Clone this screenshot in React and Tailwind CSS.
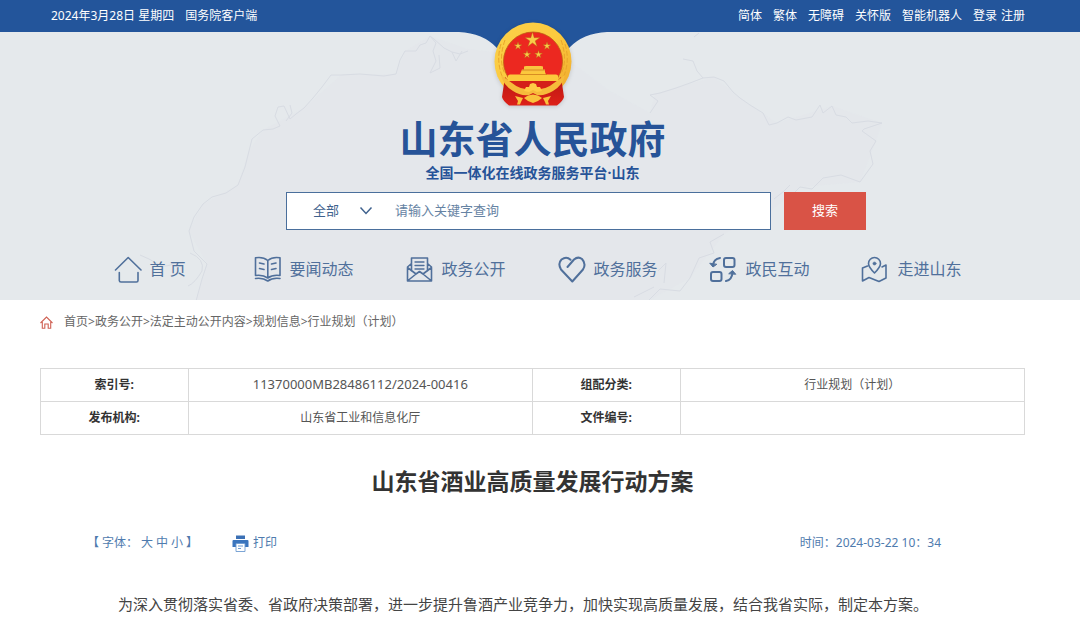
import React from "react";

const star = (cx, cy, r) => {
  const pts = [];
  for (let i = 0; i < 10; i++) {
    const a = (Math.PI / 5) * i - Math.PI / 2;
    const k = i % 2 ? r * 0.36 : r;
    pts.push(`${(cx + k * Math.cos(a)).toFixed(1)},${(cy + k * Math.sin(a)).toFixed(1)}`);
  }
  return pts.join(" ");
};

function Emblem() {
  return (
    <svg viewBox="0 0 80 86" className="h-[86px] w-20 drop-shadow-sm" role="img" aria-label="国徽">
      <defs>
        <linearGradient id="gold" x1="0" y1="0" x2="1" y2="1">
          <stop offset="0" stopColor="#fbd04a" />
          <stop offset="0.5" stopColor="#fcca3e" />
          <stop offset="1" stopColor="#eda52a" />
        </linearGradient>
        <linearGradient id="drape" x1="0" y1="0" x2="0" y2="1">
          <stop offset="0" stopColor="#b91712" />
          <stop offset="1" stopColor="#dd2018" />
        </linearGradient>
      </defs>
      <ellipse cx="40" cy="39.500" rx="38.500" ry="39" fill="url(#gold)" />
      <path
        d="M8 22 Q3 38 9 54 M12 18 Q5 38 12 52 M72 22 Q77 38 71 54 M68 18 Q75 38 68 52"
        fill="none"
        stroke="#e9a42a"
        strokeWidth="1"
        strokeDasharray="5 2"
      />
      <path d="M12 55 L9 75 Q10 79 16 83.500 H64 Q70 79 71 75 L68 55 L60 64 L40 70 L20 64 Z" fill="url(#drape)" />
      <ellipse cx="40" cy="39.500" rx="29.500" ry="29.500" fill="#ec2820" stroke="#bf5a13" strokeWidth="0.8" />
      <path d="M14 59 H66 L56 66 H24 Z" fill="#d42019" />
      <path d="M8 53 Q15 58 19 61 Q27 68 40 68 Q53 68 61 61 L72 53 Q70 63 60 69 Q52 74 44 73 L40 71 L36 73 Q27 74 20 69 Q10 63 8 53Z" fill="#f6bb3b" />
      <path d="M15 59 V54 Q15 52.500 17 52.500 H27 L28 50 H52 L53 52.500 H63 Q65 52.500 65 54 V59 Z" fill="#fcc83c" />
      <path d="M28 50 L29 47.500 H31 V44.500 L33 44 H48 L50 44.500 V47.500 H52 V50 Z" fill="#f9c440" />
      <path d="M29 48 H52 M27 52.500 H54" stroke="#c87417" strokeWidth="0.7" />
      <path d="M31 69 L33 65 L36 65 L37 62 L40 61 L43 62 L44 65 L47 65 L49 69 L44 70 L40 68 L36 70Z" fill="#ffcb45" />
      <path d="M31 76 L35 73.500 L40 72.500 L45 73.500 L49 76 L45 79 L40 81 L35 79Z" fill="#fac33c" />
      <path d="M22 74 L30 76 L28 80 L27 82.500 H24 L25 79Z M58 74 L50 76 L52 80 L53 82.500 H56 L55 79Z" fill="#fac23d" />
      <g fill="#f8cc48" stroke="#b4560f" strokeWidth="0.4">
        <polygon points={star(39.5, 18, 8)} />
        <polygon points={star(25, 24, 4.3)} />
        <polygon points={star(54, 24, 4.3)} />
        <polygon points={star(34, 32.5, 4.3)} />
        <polygon points={star(45.5, 32.5, 4.3)} />
      </g>
    </svg>
  );
}

function MapBackdrop() {
  return (
    <svg
      viewBox="0 30 1080 270"
      preserveAspectRatio="xMidYMid slice"
      className="pointer-events-none absolute inset-0 h-full w-full"
      fill="none"
      stroke="#d8dce3"
      strokeWidth="1"
      strokeLinejoin="round"
      aria-hidden="true"
    >
      <path
        fill="#e2e6eb"
        fillOpacity="0.6"
        stroke="none"
        d="M430 35 L405 50 L396 73 L341 74 L304 107 L263 129 L249 150 L238 184 L203 203 L189 230 L207 263 L196 300 H648 L690 277 L724 233 L768 212 L800 186 L860 181 L876 140 L882 122 L832 105 L777 122 L740 97 L714 76 L655 93 L650 112 L610 90 L570 60 L468 48Z"
      />
      <path d="M468 50 L460 53 L452 51 L444 47 L434 38 L430 35 L426 42 L420 44 L416 50 L405 50 L400 59 L396 73 L384 75 L360 73 L341 74 L331 74 L322 86 L313 97 L304 107 L296 113 L290 118 L284 105 L278 106 L275 115 L280 125 L273 128 L263 129 L252 138 L249 150 L245 166 L238 184 L226 192 L212 196 L203 203 L194 216 L189 230 L194 250 L207 263 L202 278 L196 300" />
      <path d="M648 300 L660 288 L680 290 L690 277 L699 257 L714 252 L710 241 L724 233 M790 196 L800 186 L812 188 L823 177 L841 174 L860 181 L873 163 L870 150 L876 140 L862 130 L864 128 L882 122 L868 120 L852 122 L846 116 L836 114 L832 105 L823 112 L820 104 L812 116 L796 119 L788 116 L777 122 L769 124 L763 112 L750 104 L740 97 L733 91 L724 80 L714 76 L703 77 L690 82 L676 87 L660 92 L650 94 L658 100 L650 112" />
      <path d="M430 35 L436 42 L433 50 L436 60 L430 72 L440 67 L439 54 M452 51 L456 60 L462 50 M699 32 L694 36 M683 58 L693 60 L697 70 L703 77 M286 120 L292 112 L290 104 M140 254 Q150 258 156 262 Q166 268 174 262 M190 252 Q205 258 202 270 Q195 282 188 285 M774 198 Q785 190 790 184 M658 270 L666 262 L664 282 M634 296 L654 286" />
    </svg>
  );
}

const icons = {
  home: (
    <>
      <path d="M1.500 15 L14.200 2.500 L27 15" />
      <path d="M5.300 17.500 V25.500 Q5.300 27 7 27 H22.500 Q24 27 24 25.500 V17.500" />
    </>
  ),
  book: (
    <>
      <path d="M1.500 2.800 Q9 1.500 13.800 5.500 Q18.500 1.500 26 2.800 V20.500 Q18.500 19.500 13.800 23 Q9 19.500 1.500 20.500Z M13.800 5.500 V22" />
      <path d="M1.500 23.500 Q9 22.500 13.800 26 Q18.500 22.500 26 23.500 M5.500 8 L10 9 M5.500 13.500 L10 14.500 M17.500 9 L22 8 M17.500 14.500 L22 13.500" />
    </>
  ),
  mail: (
    <>
      <path d="M5.500 16 V3 H21.500 V16 M5.500 8.500 L1.500 12 V26 H25.500 V12 L21.500 8.500 M1.500 12.500 L10 19 L13.500 16.500 L17 19 L25.500 12.500 M2 25.500 L10 19 M25 25.500 L17 19" />
      <path d="M9 7 H18 M9 10.500 H18 M9 14 H18" strokeWidth="1.3" />
    </>
  ),
  heart: (
    <path
      d="M9.500 12 L16 4.500 Q20 1 24 4 Q28.500 9 25 14.500 L14.300 26.500 L3 14.500 Q-0.500 8.500 3.500 4.500 Q8.500 0.800 12.500 4.800"
      strokeWidth="2"
    />
  ),
  swap: (
    <>
      <rect x="15" y="3" width="10.500" height="9" rx="2" strokeWidth="2" />
      <rect x="2" y="17" width="10.500" height="9" rx="2" strokeWidth="2" />
      <path d="M11 3 Q4.500 4 4 10.500 M17 26 Q23 25 23.500 17.500" strokeWidth="2" />
      <path d="M1 8.500 L4 12 L7.500 9.500Z M20 18.500 L23.500 15.500 L26.500 19Z" fill="currentColor" strokeWidth="1" />
    </>
  ),
  map: (
    <>
      <path d="M13.500 18 Q7.500 12 7.500 8.500 A6 6 0 0 1 19.500 8.500 Q19.500 12 13.500 18Z" />
      <path d="M6.500 11 L1.500 13 V26 L8 22.500 L18 26.500 L25 23 V10 L21 12" />
      <circle cx="13.500" cy="8.500" r="1.600" fill="currentColor" strokeWidth="0.500" />
    </>
  ),
};

const navItems = [
  ["home", "首 页"],
  ["book", "要闻动态"],
  ["mail", "政务公开"],
  ["heart", "政务服务"],
  ["swap", "政民互动"],
  ["map", "走进山东"],
];

const topLinks = ["简体", "繁体", "无障碍", "关怀版", "智能机器人"];
const crumbs = ["首页", "政务公开", "法定主动公开内容", "规划信息", "行业规划（计划）"];

function TopBar() {
  return (
    <div className="flex h-8 items-center justify-between bg-[#23559b] pr-[55px] pl-[51px] text-xs text-white">
      <div className="flex gap-[11px]">
        <span>2024年3月28日 星期四</span>
        <a href="#client">国务院客户端</a>
      </div>
      <div className="flex gap-[11px]">
        {topLinks.map((t) => (
          <a key={t} href="#top">{t}</a>
        ))}
        <span className="flex gap-1">
          <a href="#login">登录</a>
          <a href="#register">注册</a>
        </span>
      </div>
    </div>
  );
}

function SearchForm() {
  return (
    <form className="mt-[9px] ml-[87px] flex w-full max-w-[580px] gap-[13px] text-[13px]" onSubmit={(e) => e.preventDefault()}>
      <div className="flex h-[38px] flex-1 items-center border border-[#4a6f9c] bg-white pl-[26px] text-[#3f628e]">
        <div className="relative flex items-center">
          <select aria-label="搜索范围" className="w-[60px] appearance-none bg-transparent outline-none">
            <option>全部</option>
          </select>
          <svg viewBox="0 0 14 10" className="pointer-events-none absolute right-0 h-[10px] w-[14px]" fill="none" stroke="currentColor" strokeWidth="1.5" aria-hidden="true">
            <path d="M1.500 1.500 L7 7.500 L12.500 1.500" />
          </svg>
        </div>
        <input
          aria-label="关键字"
          placeholder="请输入关键字查询"
          className="ml-[22px] min-w-0 flex-1 bg-transparent outline-none placeholder:text-[#6683a3]"
        />
      </div>
      <button type="submit" className="w-[82px] bg-[#d95346] text-white">搜索</button>
    </form>
  );
}

function Header() {
  return (
    <header>
      <TopBar />
      <div className="relative bg-[#e5e9ec]">
        <MapBackdrop />
        <div className="relative flex flex-col items-center pt-[84px] pr-[55px] pb-[17px] pl-10">
          <div className="absolute inset-x-0 top-0 flex justify-center pr-[55px] pl-10">
            <svg viewBox="0 0 148 40" className="h-10 w-[148px]" aria-hidden="true">
              <path d="M0 0 Q24 1 38 16 L54 40 H94 L110 16 Q124 1 148 0Z" fill="#23559b" />
            </svg>
          </div>
          <div className="absolute inset-x-0 -top-[10px] flex justify-center pr-[55px] pl-10">
            <Emblem />
          </div>
          <h1 className="text-[38px] leading-[44px] font-bold text-[#265398]">山东省人民政府</h1>
          <p className="mt-[3px] text-sm leading-5 font-bold text-[#265398]">全国一体化在线政务服务平台·山东</p>
          <SearchForm />
          <nav className="mt-[25px] ml-[10px] flex w-full max-w-[848px] justify-between text-[#50709b]">
            {navItems.map(([icon, label]) => (
              <a key={label} href="#nav" className="flex h-7 items-center gap-2 first:pr-4">
                <svg viewBox="0 0 28 28" className="size-7" fill="none" stroke="currentColor" strokeWidth="1.600" strokeLinejoin="round" strokeLinecap="round" aria-hidden="true">
                  {icons[icon]}
                </svg>
                <span className="text-base">{label}</span>
              </a>
            ))}
          </nav>
        </div>
      </div>
    </header>
  );
}

function Breadcrumb() {
  return (
    <nav aria-label="面包屑" className="flex items-center gap-[11px] text-xs leading-5 text-[#666666]">
      <svg viewBox="0 0 13 13" className="size-[13px]" fill="none" stroke="#cf6154" strokeWidth="1.100" aria-hidden="true">
        <path d="M0.500 7 L6.500 1 L12.500 7 M2.300 6 V12.300 H4.800 V8 H8.200 V12.300 H10.700 V6" />
      </svg>
      <div>
        {crumbs.map((c, i) => (
          <React.Fragment key={c}>
            {i > 0 && ">"}
            <a href="#crumb">{c}</a>
          </React.Fragment>
        ))}
      </div>
    </nav>
  );
}

function InfoTable() {
  const th = "w-[15%] border border-[#d9d9d9] p-0 text-center text-xs font-bold text-[#333333]";
  const td = "w-[35%] border border-[#d9d9d9] p-0 text-center text-xs text-[#555555]";
  return (
    <table className="mt-9 w-full table-fixed border-collapse">
      <tbody>
        <tr className="h-[33px]">
          <th scope="row" className={th}>索引号:</th>
          <td className={td}>
            <span className="text-[13px]">11370000MB28486112/2024-00416</span>
          </td>
          <th scope="row" className={th}>组配分类:</th>
          <td className={td}>行业规划（计划）</td>
        </tr>
        <tr className="h-[33px]">
          <th scope="row" className={th}>发布机构:</th>
          <td className={td}>山东省工业和信息化厅</td>
          <th scope="row" className={th}>文件编号:</th>
          <td className={td}></td>
        </tr>
      </tbody>
    </table>
  );
}

export default function App() {
  return (
    <div className="bg-white font-['Noto_Sans','Noto_Sans_CJK_SC',sans-serif]">
      <Header />
      <main className="pt-3 pr-[55px] pl-10">
        <Breadcrumb />
        <InfoTable />
        <h2 className="mt-[30px] text-center text-[23px] leading-8 font-bold text-[#333333]">山东省酒业高质量发展行动方案</h2>
        <div className="mt-9 flex items-center justify-between pr-[84px] pl-[47px] text-xs leading-5 text-[#4f7bae]">
          <div className="flex items-center gap-[34px]">
            <div className="flex items-center gap-[3px]">
              <span>【</span>
              <span>字体：</span>
              <button type="button">大</button>
              <button type="button">中</button>
              <button type="button">小</button>
              <span>】</span>
            </div>
            <button type="button" className="flex items-center gap-1">
              <svg viewBox="0 0 17 17" className="size-[17px]" aria-hidden="true">
                <path d="M4 0.500 H13 V4 H4Z" fill="#3b70b5" />
                <path d="M1.500 5 H15.500 Q16.500 5 16.500 6 V12 H0.500 V6 Q0.500 5 1.500 5Z" fill="#3b75bd" />
                <path d="M4 8.500 H13 V16.500 H4Z" fill="#ffffff" stroke="#6d9bd0" strokeWidth="0.900" />
                <path d="M6 11 H11 M6 13.500 H9" stroke="#6d9bd0" strokeWidth="1" />
              </svg>
              打印
            </button>
          </div>
          <span>时间：2024-03-22 10：34</span>
        </div>
        <p className="mt-[39px] pl-[78px] text-[15px] leading-6 text-[#444444]">
          为深入贯彻落实省委、省政府决策部署，进一步提升鲁酒产业竞争力，加快实现高质量发展，结合我省实际，制定本方案。
        </p>
      </main>
    </div>
  );
}
